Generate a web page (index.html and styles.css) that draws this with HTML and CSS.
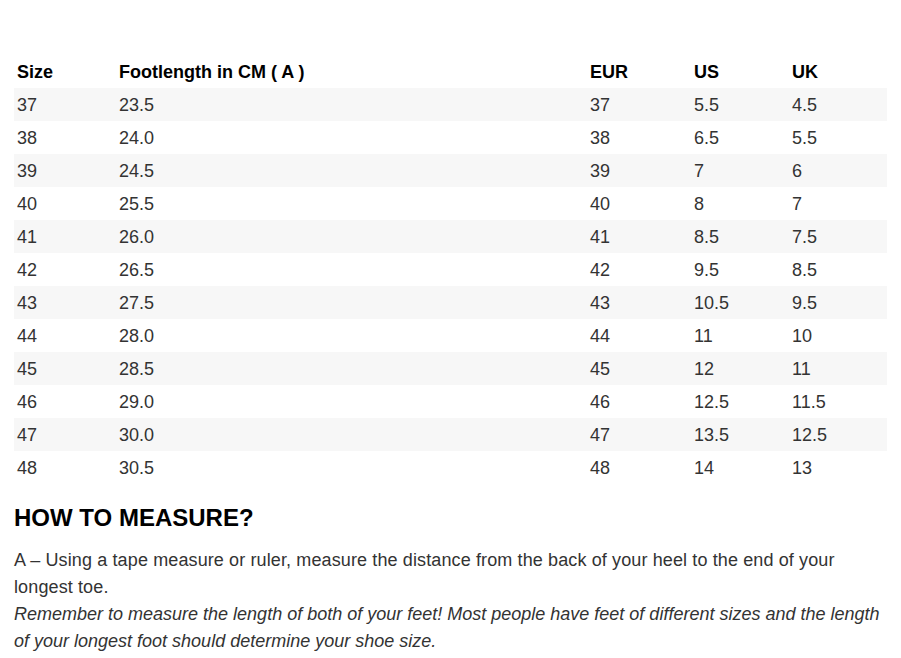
FILE: index.html
```html
<!DOCTYPE html>
<html>
<head>
<meta charset="utf-8">
<link rel="stylesheet" href="styles.css">
</head>
<body>
<div class="page">
<table class="sizes">
<colgroup>
<col class="c1"><col class="c2"><col class="c3"><col class="c4"><col class="c5">
</colgroup>
<thead>
<tr><th>Size</th><th>Footlength in CM ( A )</th><th>EUR</th><th>US</th><th>UK</th></tr>
</thead>
<tbody>
<tr><td>37</td><td>23.5</td><td>37</td><td>5.5</td><td>4.5</td></tr>
<tr><td>38</td><td>24.0</td><td>38</td><td>6.5</td><td>5.5</td></tr>
<tr><td>39</td><td>24.5</td><td>39</td><td>7</td><td>6</td></tr>
<tr><td>40</td><td>25.5</td><td>40</td><td>8</td><td>7</td></tr>
<tr><td>41</td><td>26.0</td><td>41</td><td>8.5</td><td>7.5</td></tr>
<tr><td>42</td><td>26.5</td><td>42</td><td>9.5</td><td>8.5</td></tr>
<tr><td>43</td><td>27.5</td><td>43</td><td>10.5</td><td>9.5</td></tr>
<tr><td>44</td><td>28.0</td><td>44</td><td>11</td><td>10</td></tr>
<tr><td>45</td><td>28.5</td><td>45</td><td>12</td><td>11</td></tr>
<tr><td>46</td><td>29.0</td><td>46</td><td>12.5</td><td>11.5</td></tr>
<tr><td>47</td><td>30.0</td><td>47</td><td>13.5</td><td>12.5</td></tr>
<tr><td>48</td><td>30.5</td><td>48</td><td>14</td><td>13</td></tr>
</tbody>
</table>
<h2 class="title">HOW TO MEASURE?</h2>
<p class="text"><span class="step">A – Using a tape measure or ruler, measure the distance from the back of your heel to the end of your longest toe.</span><br><em>Remember to measure the length of both of your feet! Most people have feet of different sizes and the length of your longest foot should determine your shoe size.</em></p>
</div>
</body>
</html>
```
FILE: styles.css
```css
html, body {
  margin: 0;
  padding: 0;
  background: #fff;
}
body {
  font-family: "Liberation Sans", Arial, sans-serif;
  color: #333;
}
.page {
  padding: 55px 14px 0 14px;
}
.sizes {
  width: 873px;
  border-collapse: collapse;
  table-layout: fixed;
  font-size: 18px;
}
.c1 { width: 102px; }
.c2 { width: 471px; }
.c3 { width: 104px; }
.c4 { width: 98px; }
.c5 { width: 98px; }
.sizes th, .sizes td {
  height: 33px;
  padding: 0 0 0 3px;
  text-align: left;
  vertical-align: middle;
  line-height: 20px;
}
.sizes th {
  font-weight: bold;
  color: #000;
}
.sizes tbody tr:nth-child(odd) {
  background: #f7f7f7;
}
.title {
  margin: 20px 0 0 0;
  font-size: 24px;
  line-height: 28px;
  font-weight: bold;
  color: #000;
}
.text {
  margin: 15px 0 0 0;
  font-size: 18px;
  line-height: 27px;
  color: #333;
}
.step {
  letter-spacing: 0.12px;
}
```
